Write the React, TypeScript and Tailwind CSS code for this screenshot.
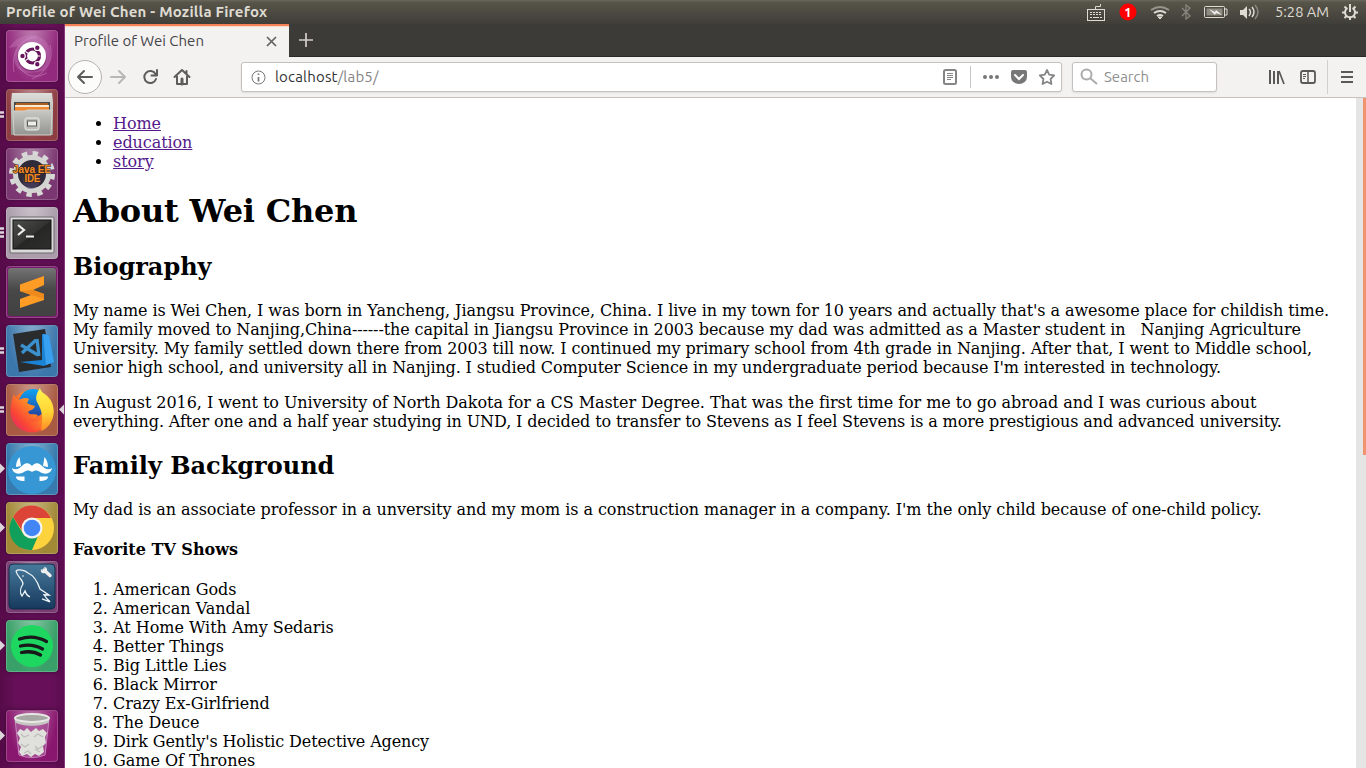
import type { ReactNode } from "react";

const UI = "font-['Ubuntu','Noto_Sans','Open_Sans',sans-serif]";

function Tile({ bg, marks = 0, active = false, glow = true, children }: { bg: string; marks?: number; active?: boolean; glow?: boolean; children: ReactNode }) {
  return (
    <div className="relative flex h-[52px] w-full shrink-0 justify-center pr-px">
      <div className={`relative h-[52px] w-[52px] overflow-hidden rounded-[4px] border border-white/20 shadow-[0_0_5px_rgba(0,0,0,0.4)] ${bg}`}>
        {glow && <div className="absolute inset-0 bg-[radial-gradient(ellipse_at_50%_-20%,rgba(255,255,255,0.42),rgba(255,255,255,0)_75%)]" />}
        <svg className="absolute -top-px -left-px" width="52" height="52" viewBox="0 0 52 52">{children}</svg>
      </div>
      <svg className="absolute top-0 left-0" width="65" height="52" viewBox="0 0 65 52">
        {marks === 1 && <path d="M0 20.500 5 25.500 0 30.500z" fill="#dcd5da" />}
        {marks === 2 && <path d="M0 23.500h4M0 27.500h4" stroke="#dcd5da" strokeWidth="2.400" />}
        {marks === 3 && <path d="M0 21.500h4M0 25.500h4M0 29.500h4" stroke="#dcd5da" strokeWidth="2.500" />}
        {active && <path d="M64 20.500v10L59 25.500z" fill="#dcd5da" />}
      </svg>
    </div>
  );
}

function Launcher() {
  return (
    <aside className="flex h-[744px] w-[65px] shrink-0 flex-col gap-[7px] border-r border-[#843a78] bg-[linear-gradient(90deg,#560b48,#671059_25%,#671059_80%,#5c0c50)] pt-[6px]">
      <Tile bg="bg-[#932a7d]">
        <path d="M3 18C10 5 31-1 41 13c6 9 3 22-4 28L20 43C7 39 5 27 13 16" fill="#d794cf" fillOpacity=".28" />
        <path d="M8 42C5 24 12 9 30 7M44 15c4 15-3 27-18 34M13 37c8 11 18 11 28 6" fill="none" stroke="#dfa2d7" strokeOpacity=".4" />
        <circle cx="26" cy="27" r="14.500" fill="#641258" opacity=".5" />
        <circle cx="26" cy="26" r="14" fill="#fff" />
        <circle cx="26.500" cy="26" r="7" fill="none" stroke="#69155c" strokeWidth="3.200" />
        {[[16.500, 26], [31.300, 17.700], [31.300, 34.300]].map(([x, y]) => <circle key={`${x}-${y}`} cx={x} cy={y} r="2.800" fill="#69155c" stroke="#fff" strokeWidth="1.200" />)}
        <path d="m19.500 21.500 3 2m7.500 2.500h4.500m-15 4.500 3-2" stroke="#fff" strokeWidth="1.100" />
      </Tile>
      <Tile bg="bg-[#8e3d42]" marks={2}>
        <defs>
          <linearGradient id="cab" x2="0" y2="1"><stop stopColor="#dededb" /><stop offset="1" stopColor="#8f8f8c" /></linearGradient>
          <linearGradient id="drawer" x2="0" y2="1"><stop stopColor="#c8c8c5" /><stop offset="1" stopColor="#949491" /></linearGradient>
        </defs>
        <path d="M6 4h40l1 9v33H5V13z" fill="url(#cab)" />
        <path d="M8 13h36v11H8z" fill="#4b4a46" />
        <path d="M10 14h32v9H10z" fill="#a95f24" />
        <path d="M9 16h34v3H9z" fill="#f7ead5" /><path d="M9 18h34v5H9z" fill="#ee8931" />
        <path d="M7 22h12l2-1h25l-1 25H8z" fill="url(#drawer)" stroke="#d0d0cd" />
        <rect x="19" y="29" width="14" height="12" rx="2" fill="#bbbbb7" stroke="#eeeeeb" />
        <rect x="21.500" y="32" width="9" height="5" fill="#ededea" stroke="#60605b" />
      </Tile>
      <Tile bg="bg-[#7b3771]">
        <circle cx="26" cy="26" r="20.500" fill="none" stroke="#d8d8d6" strokeWidth="5" strokeDasharray="5.367 5.367" />
        <circle cx="26" cy="26" r="16.500" fill="#302b3b" stroke="#d4d4d2" strokeWidth="5" />
        <circle cx="25" cy="33" r="8" fill="#51466d" opacity=".55" />
        <g className="font-['Liberation_Sans',sans-serif] text-[10px] font-bold [paint-order:stroke]" fill="#f78c22" stroke="#33221c" strokeWidth="1.200" textAnchor="middle">
          <text x="26" y="24.500" textLength="38">Java EE</text><text x="26.500" y="34" textLength="16">IDE</text>
        </g>
      </Tile>
      <Tile bg="bg-[#aa9caa]" marks={3}>
        <defs><linearGradient id="term" x2="1" y2="1"><stop stopColor="#4c4e4b" /><stop offset=".5" stopColor="#333431" /><stop offset=".52" stopColor="#262724" /><stop offset="1" stopColor="#30312f" /></linearGradient></defs>
        <rect x="4" y="10" width="44" height="36" rx="1" fill="#dad8d9" stroke="#6d686c" />
        <rect x="7" y="13" width="38" height="29" fill="url(#term)" stroke="#111" />
        <path d="m12 18 6 5-6 5M20 29.500h8" fill="none" stroke="#eee" strokeWidth="2.200" />
      </Tile>
      <Tile bg="bg-[#7b1a6c]" glow={false}>
        <defs><linearGradient id="sub" x2="0" y2="1"><stop stopColor="#747474" /><stop offset=".45" stopColor="#484848" /><stop offset="1" stopColor="#414141" /></linearGradient></defs>
        <rect x="2" y="2" width="48" height="48" rx="3" fill="url(#sub)" />
        <path d="M14 18.500 38 10v9l-11 5 11 4v6L14 42v-9l11-4-11-4z" fill="#ff9c26" />
        <path d="m27 24 11 4v5L14 25z" fill="#ed8a1b" />
      </Tile>
      <Tile bg="bg-[#3c77ac]" marks={2}>
        <path d="m7 9 32-5 6 38-32 5z" fill="#292b2d" />
        <path d="m36 9 7 1 5 27-10 4-24-4 22-2z" fill="#1b83d3" />
        <path d="m37 9 6 1 5 27-8 3z" fill="#39a0ef" />
        <path d="m31 14 2 17M30 15 16 28M15 20l17 10" fill="none" stroke="#3b91ce" strokeWidth="3.200" />
      </Tile>
      <Tile bg="bg-[#a95a42]" marks={2} active>
        <defs>
          <linearGradient id="ff" x1="1" y1="0" x2="0" y2="1"><stop stopColor="#ffbd3c" /><stop offset=".38" stopColor="#ff8a26" /><stop offset=".7" stopColor="#f94436" /><stop offset="1" stopColor="#df2278" /></linearGradient>
          <linearGradient id="globe" x2="0" y2="1"><stop stopColor="#0ba4f5" /><stop offset="1" stopColor="#263f9c" /></linearGradient>
          <linearGradient id="flame" x2="0" y2="1"><stop stopColor="#fff44f" /><stop offset=".55" stopColor="#ffd534" /><stop offset="1" stopColor="#ff8a26" /></linearGradient>
        </defs>
        <circle cx="26" cy="27" r="21.500" fill="url(#ff)" />
        <circle cx="27" cy="19" r="14" fill="url(#globe)" />
        <path d="M8 10c1 3 2 4 5 6 3-2 7-3 10-1l-2 4c3 2 6 2 8 3-1 4-5 4-7 6 2 4 6 1 10 3-3 5-8 4-10 3 4 6 12 5 15-1l3 11-18 4C7 42 1 26 8 10" fill="url(#ff)" />
        <path d="M31 18c-2-5 0-9 3-14 1 6 9 7 12 15 5 13-2 25-11 28 2-12 2-19-4-29" fill="url(#flame)" />
      </Tile>
      <Tile bg="bg-[#367aae]" marks={1}>
        <circle cx="26" cy="27" r="24" fill="#3797d4" />
        <g fill="#fff">
          <path d="M6 25c4 3 8 0 11-3 3-3 7-2 9 1 2-3 6-4 9-1 3 3 7 6 11 3-1 6-7 7-12 4-3-2-5-2-8 0-3-2-5-2-8 0-5 3-11 2-12-4" />
          <path d="M13.500 14 15 23l-5 1c0-4 1-7 3.500-10m25 0L37 23l5 1c0-4-1-7-3.500-10M10 33.500h8.500V38C14 38 10 37 10 33.500m32 0h-8.500V38c4.500 0 8.500-1 8.500-4.500" />
        </g>
      </Tile>
      <Tile bg="bg-[#a28936]" marks={1}>
        <circle cx="26" cy="26" r="22" fill="#fdd33d" />
        <path d="M7 15C16-1 37 0 45 16H27l-10 14z" fill="#dc4437" />
        <path d="m7 15 11 18c3 3 8 4 14 1l-6 14C7 48-2 30 7 15" fill="#11a05b" />
        <circle cx="26" cy="26" r="10.500" fill="#f3f3f1" /><circle cx="26" cy="26" r="8.300" fill="#4285f4" />
      </Tile>
      <Tile bg="bg-[#793c72]">
        <defs><linearGradient id="sql" x2="0" y2="1"><stop stopColor="#477a9c" /><stop offset="1" stopColor="#17395d" /></linearGradient></defs>
        <rect x="3" y="3" width="46" height="45" rx="4" fill="url(#sql)" stroke="#112d48" />
        <path d="M10 10c2-2 9-1 12 2 7 3 10 10 12 16l9 6-5-.2 3 4 3 3-8-3M10 10c1 6 7 8 7 13-4 6-3 9-1 12l3-5c1 4 3 5 5 6" fill="none" stroke="#edf4f7" strokeWidth="1.300" /><circle cx="17" cy="15" r=".8" fill="#fff" />
        <path d="m38 9 6 5.500" stroke="#eee" strokeWidth="3.400" strokeLinecap="round" />
        <path d="M38 6c4 0 4 5 1 6s-5-1-4-4l2 2 2-2z" fill="#eee" />
      </Tile>
      <Tile bg="bg-[#38a068]" marks={1}>
        <circle cx="26" cy="26" r="21" fill="#1ed760" />
        <path d="M13.500 19c9-3 19-2 27 2.500M14.500 26c8-2 15-1 22 3M15.500 32.500c7-1.500 13-1 19 2.500" fill="none" stroke="#17191a" strokeWidth="3.300" strokeLinecap="round" />
      </Tile>
      <div className="mt-[31px]">
        <Tile bg="bg-[#8a176f]" marks={1}>
          <path d="M9 9h34l-4 36q-13 5-26 0z" fill="#b565a6" fillOpacity=".45" stroke="#c787bd" />
          <path d="m11 23 3-4 4 2 3-3 4 4 5-4 3 3 4-2 4 4-2 4 1 6-3 3 1 6-5 4-4-2-4 3-4-3-5 2-3-4 2-5-3-4 2-5z" fill="#e0e0dd" />
          <path d="m15 24 3 3 5-2m5 2 4-3 5 3m-22 7 4 3 4-3m6 2 3 3 5-3m-19 7 4-2 3 3m4-5 5 3" fill="none" stroke="#bdbdba" strokeWidth="1.300" />
          <path d="M9 8v4c5 5 29 5 34 0V8z" fill="#c5c5c2" />
          <ellipse cx="26" cy="8" rx="17" ry="4" fill="#a7a7a4" stroke="#e6e6e3" strokeWidth="2" />
        </Tile>
      </div>
    </aside>
  );
}

function TopBar() {
  return (
    <header className={`flex h-6 shrink-0 items-center bg-[linear-gradient(#69675b,#575449_10%,#3f3e39)] text-[#dfdbd2] ${UI}`}>
      <span className="ml-[6px] w-[270px] text-[15px] leading-6 font-bold tracking-[0.210px] whitespace-nowrap">Profile of Wei Chen - Mozilla Firefox</span>
      <svg className="ml-auto" width="290" height="24" viewBox="1076 0 290 24" fill="none" stroke="#dfdbd2">
        <rect x="1087.500" y="9.500" width="17" height="11" /><path d="M1090 12.500h12M1090 14.500h12" strokeDasharray="2 1" /><path d="M1090 17.500h2m1 0h6m1 0h2M1095.500 9V6.500h5v-2.500" />
        <circle cx="1128" cy="12" r="8.500" fill="#f00" stroke="none" />
        <text x="1128" y="17" textAnchor="middle" fill="#fff" stroke="none" className="text-[13px] font-bold">1</text>
        <path d="M1151 10q9-6 18 0" stroke="#98958c" strokeWidth="2" /><path d="M1154 13q6-4 12 0M1157 16q3-2 6 0" strokeWidth="2" /><path d="m1158 17 2 2 2-2z" fill="#dfdbd2" />
        <path d="m1182 8 8 8-4 3V5l4 3-8 8" stroke="#89877e" strokeWidth="1.300" />
        <rect x="1204.500" y="6.500" width="20" height="11" rx="1" /><rect x="1206.500" y="8.500" width="16" height="7" fill="#8e8b81" stroke="none" /><path d="M1225 9h2v6h-2" /><path d="m1209 9 6 3 1-2 6 5-6-2-1 2z" fill="#eee" stroke="none" />
        <path d="M1240 10h3l4-4v13l-4-4h-3z" fill="#dfdbd2" stroke="none" /><path d="M1249 9q3 3 0 7M1252 7q4 5 0 10" strokeWidth="1.500" /><path d="M1255 5q6 7 0 14" stroke="#89877e" strokeWidth="1.500" />
        <text x="1275" y="17" textLength="54" lengthAdjust="spacingAndGlyphs" fill="#dfdbd2" stroke="none" className="text-[15px]">5:28 AM</text>
        <path d="M1347.500 8a5 5 0 1 0 5 0M1350 4v8" strokeWidth="2" /><path d="m1344.500 6.500 2 2m9-2-2 2m-11.500 4h3m10 0h3m-13.500 5.500 2-2m9 2-2-2m-3.500 1v3" strokeWidth="2" />
      </svg>
    </header>
  );
}

function Tabs() {
  return (
    <div className={`flex h-[33px] shrink-0 border-b border-[#2a2926] bg-[#3c3b37] ${UI}`}>
      <div className="-mb-px flex h-[33px] w-[224px] items-center border-t-2 border-[#f58156] bg-[#f4f2f1] shadow-[inset_0_1px_#fbd8c9]">
        <span className="ml-[9px] text-[15px] whitespace-nowrap text-[#45464a]">Profile of Wei Chen</span>
        <svg className="mr-3 ml-auto" width="11" height="11" viewBox="0 0 11 11"><path d="m1 1 9 9m0-9-9 9" stroke="#626262" strokeWidth="1.700" /></svg>
      </div>
      <svg className="ml-[9px]" width="18" height="32" viewBox="0 0 18 32"><path d="M1 16h14M8 9v14" stroke="#d3d1cb" strokeWidth="1.700" /></svg>
    </div>
  );
}

function Toolbar() {
  return (
    <nav className={`flex h-[41px] shrink-0 items-center border-b border-[#c5c2bf] bg-[#f4f2f1] ${UI}`}>
      <svg width="176" height="40" viewBox="65 57 176 40" fill="none" stroke="#5c5c5c" strokeWidth="2" strokeLinecap="round" strokeLinejoin="round">
        <circle cx="85" cy="77" r="16.500" fill="#fcfcfb" stroke="#b5b2af" strokeWidth="1" />
        <path d="M92 77H78m6-6-6 6 6 6" /><path d="M111 77h14m-6-6 6 6-6 6" stroke="#b9b7b5" />
        <path d="M155.500 74a6 6 0 1 0 .5 5M157 70v5.500H151.500" /><path d="m174.500 77 7.500-7 7.500 7M177 76.500V84h10v-7.500M186.500 74v-3" /><path d="M182 84v-5" strokeWidth="3" />
      </svg>
      <div className="flex h-[30px] w-[821px] items-center rounded-[3px] border border-[#c4c1be] bg-white shadow-[0_1px_2px_#ddd]">
        <svg className="ml-[9px]" width="15" height="15" viewBox="0 0 15 15" fill="none" stroke="#777"><circle cx="7.500" cy="7.500" r="6.500" /><path d="M7.500 7v4.500M7.500 3.500v1.500" strokeWidth="1.700" /></svg>
        <span className="mt-px ml-[9px] text-[15px] tracking-[0.180px] text-[#333]">localhost<span className="text-[#838383]">/lab5/</span></span>
        <svg className="ml-auto" width="126" height="28" viewBox="935 63 126 28" fill="none" stroke="#858585" strokeWidth="2">
          <rect x="944" y="70" width="12" height="14" rx="1.500" /><path d="M947 73.500h6M947 75.500h6M947 77.500h6M947 79.500h4" strokeWidth="1" /><path d="M970.500 66v22" stroke="#c5c5c5" strokeWidth="1" />
          <g fill="#777" stroke="none"><circle cx="985" cy="77" r="2" /><circle cx="991" cy="77" r="2" /><circle cx="997" cy="77" r="2" /><path d="M1013 70h12q2 0 2 2v5a8 7 0 0 1-16 0v-5q0-2 2-2" /></g>
          <path d="m1015 75 4 4 4-4" stroke="#fff" strokeWidth="2" strokeLinecap="round" />
          <path d="m1047 70 2.200 4.700 5 .7-3.600 3.600.8 5-4.400-2.300-4.400 2.300.8-5-3.600-3.600 5-.7z" strokeWidth="1.800" strokeLinejoin="round" />
        </svg>
      </div>
      <div className="ml-[10px] flex h-[30px] w-[145px] items-center rounded-[3px] border border-[#c4c1be] bg-white shadow-[0_1px_2px_#ddd]">
        <svg className="ml-[7px]" width="18" height="18" viewBox="0 0 18 18" fill="none" stroke="#aaa" strokeWidth="2"><circle cx="6.500" cy="6.500" r="5" /><path d="m10 10 7 6" /></svg>
        <span className="mt-px ml-[6px] text-[15px] text-[#909090]">Search</span>
      </div>
      <svg className="ml-auto" width="106" height="40" viewBox="1260 57 106 40" fill="none" stroke="#595959" strokeWidth="2">
        <path d="M1270 70v14M1274 71v13M1278 71v13" /><path d="m1279 71 5 13" strokeWidth="1.700" />
        <rect x="1301" y="71" width="14" height="12" rx="2" strokeWidth="1.800" /><path d="M1308 71v12" strokeWidth="1.500" /><path d="M1303 74.500h3M1303 76.500h3M1303 78.500h2" strokeWidth="1" /><path d="M1327.500 60v34" stroke="#d2d0ce" strokeWidth="1" /><path d="M1341 72h12M1341 77h12M1341 82h12" />
      </svg>
    </nav>
  );
}

const shows = ["American Gods", "American Vandal", "At Home With Amy Sedaris", "Better Things", "Big Little Lies", "Black Mirror", "Crazy Ex-Girlfriend", "The Deuce", "Dirk Gently's Holistic Detective Agency", "Game Of Thrones"];

function Page() {
  return (
    <div className="flex min-h-0 flex-1">
      <main className="min-w-0 flex-1 overflow-hidden bg-white px-2 font-['DejaVu_Serif',serif] text-[16px] leading-[19px] tracking-[-0.073px] whitespace-nowrap text-black">
        <ul className="mt-4 list-disc pl-10 text-[#551a8b] marker:text-black">
          {["Home", "education", "story"].map((item) => <li key={item}><a href="#" className="underline">{item}</a></li>)}
        </ul>
        <h1 className="mt-[21.440px] mb-[22.440px] text-[32px] leading-[38px] font-bold tracking-[-0.2px]">About Wei Chen</h1>
        <h2 className="mb-[19.920px] text-[24px] leading-[28px] font-bold tracking-normal">Biography</h2>
        <p>
          <span className="tracking-[-0.082px]">My name is Wei Chen, I was born in Yancheng, Jiangsu Province, China. I live in my town for 10 years and actually that's a awesome place for childish time.</span><br />
          <span className="tracking-[-0.107px]">My family moved to Nanjing,China------the capital in Jiangsu Province in 2003 because my dad was admitted as a Master student in &nbsp; Nanjing Agriculture</span><br />
          <span className="tracking-[-0.097px]">University. My family settled down there from 2003 till now. I continued my primary school from 4th grade in Nanjing. After that, I went to Middle school,</span><br />
          <span className="tracking-[-0.135px]">senior high school, and university all in Nanjing. I studied Computer Science in my undergraduate period because I'm interested in technology.</span>
        </p>
        <p className="mt-4">
          <span className="tracking-[-0.053px]">In August 2016, I went to University of North Dakota for a CS Master Degree. That was the first time for me to go abroad and I was curious about</span><br />
          <span className="tracking-[-0.117px]">everything. After one and a half year studying in UND, I decided to transfer to Stevens as I feel Stevens is a more prestigious and advanced university.</span>
        </p>
        <h2 className="mt-[20.920px] mb-[19.920px] text-[24px] leading-[28px] font-bold tracking-normal">Family Background</h2>
        <p className="tracking-[-0.067px]">My dad is an associate professor in a unversity and my mom is a construction manager in a company. I'm the only child because of one-child policy.</p>
        <h4 className="my-[21.280px] font-bold tracking-normal">Favorite TV Shows</h4>
        <ol className="list-decimal pl-10">{shows.map((show) => <li key={show} className={show.length > 30 ? "tracking-[-0.120px]" : "tracking-[-0.020px]"}>{show}</li>)}</ol>
      </main>
      <div className="flex w-[10px] shrink-0 justify-end bg-[#e5e5e5]"><div className="h-[357px] w-[3px] bg-[#f0936e]" /></div>
    </div>
  );
}

export default function App() {
  return (
    <div className="flex h-[768px] w-[1366px] flex-col overflow-hidden">
      <TopBar />
      <div className="flex min-h-0 flex-1">
        <Launcher />
        <div className="flex min-w-0 flex-1 flex-col"><Tabs /><Toolbar /><Page /></div>
      </div>
    </div>
  );
}
